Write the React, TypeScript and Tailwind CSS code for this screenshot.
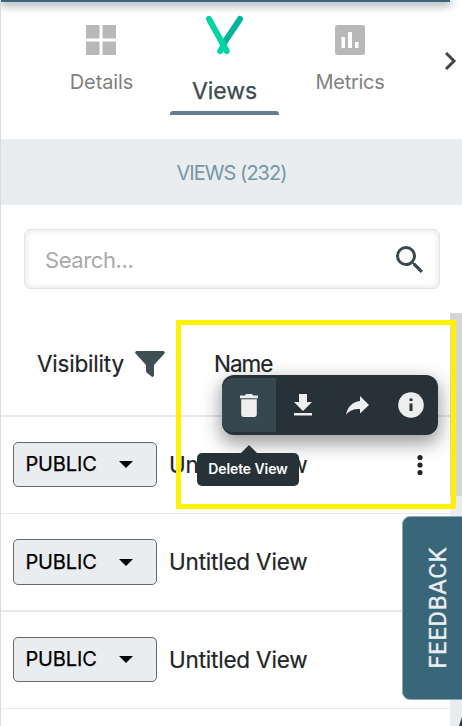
const FONT = "font-[Inter,'Liberation_Sans',sans-serif]";

function Row({ className, button, menu }: { className: string; button: string; menu?: boolean }) {
  return (
    <div className={`flex shrink-0 items-start border-[#e6e8e9] pl-3 ${className}`}>
      <button className={`flex w-36 shrink-0 items-center rounded-[5px] border border-[#66696b] bg-[#e9edf0] pb-px pl-[11.5px] text-black ${button}`}>
        <span className="w-[93.5px] text-left text-[20px] leading-none tracking-[-0.15px] [-webkit-text-stroke:0.25px_black]">PUBLIC</span>
        <svg className="mt-px" width="14" height="7" viewBox="0 0 14 7" fill="black"><path d="M0 0H14L7 7Z" /></svg>
      </button>
      <span className="ml-3 flex h-[46px] w-[239px] items-center whitespace-nowrap text-[22.5px] tracking-[-0.2px] text-[#222526] [-webkit-text-stroke:0.2px_#222526]">Untitled View</span>
      {menu && (
        <svg className="mt-3" width="24" height="24" viewBox="0 0 24 24" fill="#222526">
          <circle cx="12" cy="3.5" r="2.6" /><circle cx="12" cy="11" r="2.6" /><circle cx="12" cy="18.5" r="2.6" />
        </svg>
      )}
    </div>
  );
}

export default function App() {
  return (
    <div className={`relative flex h-[726px] w-[462px] flex-col overflow-hidden border-l border-[#dcdcdc] bg-white ${FONT}`}>
      <div className="z-10 h-0.5 w-[449px] shrink-0 bg-[#3a6679] shadow-[0_1px_10px_1px_rgba(40,50,70,0.75)]" />

      <nav className="flex h-[137px] shrink-0 items-start">
        <div className="ml-[46px] flex w-[109px] flex-col items-center pt-[23px] text-[#808080]">
          <svg className="mr-px" width="30" height="30" viewBox="0 0 30 30" fill="#b8b8b8">
            <rect width="13.5" height="13.5" rx=".7" /><rect x="16.5" width="13.5" height="13.5" rx=".7" />
            <rect y="16.5" width="13.5" height="13.5" rx=".7" /><rect x="16.5" y="16.5" width="13.5" height="13.5" rx=".7" />
          </svg>
          <span className="mt-[15px] text-[20px] leading-6 tracking-[-0.1px]">Details</span>
        </div>
        <div className="ml-[14px] flex h-[113px] w-[109px] flex-col items-center pt-3">
          <svg width="39" height="42" viewBox="0 0 39 42" fill="none" strokeWidth="6" strokeLinecap="round">
            <path d="M35 5L19 29" stroke="#00b39b" /><path d="M4 5L21.7 37" stroke="#00d4a4" /><path d="M19 31L15.2 37" stroke="#00d4a4" />
          </svg>
          <span className="mt-[21px] text-[23px] leading-7 tracking-[-0.1px] text-[#3b4950] [-webkit-text-stroke:0.25px_#3b4950]">Views</span>
          <div className="mt-auto h-1 w-full rounded-t-[3px] bg-[#627f8d]" />
        </div>
        <div className="ml-4 flex w-[110px] flex-col items-center pt-[23px] text-[#808080]">
          <svg width="30" height="30" viewBox="0 0 30 30"><rect width="30" height="30" rx="3" fill="#b8b8b8" /><path d="M6.5 12h3.5v11H6.5zM13 7h4v16h-4zM20 17h3.5v6H20z" fill="white" /></svg>
          <span className="mt-[15px] text-[20px] leading-6 tracking-[-0.3px]">Metrics</span>
        </div>
        <svg className="ml-10 mt-[50px]" width="12" height="18" viewBox="0 0 12 18" fill="none" stroke="#444" strokeWidth="3"><path d="M1 1L9 9L1 17" /></svg>
      </nav>

      <div className="flex h-[66px] shrink-0 items-center justify-center bg-[#e9edf0] pt-0.5 text-[20px] tracking-[-0.95px] text-[#7497a5]">VIEWS (232)</div>

      <div className="mt-6 ml-[23px] flex h-[60px] w-[416px] shrink-0 items-center justify-between rounded-md border border-[#e5e5e5] pr-4 pl-5 shadow-[inset_0_0_7px_rgba(0,0,0,0.12)]">
        <span className="pt-0.5 text-[22px] tracking-[-0.4px] text-[#a9a9a9]">Search...</span>
        <svg width="27" height="27" viewBox="3 3 17.5 17.5" fill="#3b4950"><path d="M15.5 14h-.79l-.28-.27A6.47 6.47 0 0 0 16 9.5 6.5 6.5 0 1 0 9.5 16c1.61 0 3.09-.59 4.23-1.57l.27.28v.79l5 4.99L20.49 19l-4.99-5zm-6 0C7.01 14 5 11.99 5 9.5S7.01 5 9.5 5 14 7.01 14 9.5 11.99 14 9.5 14z" /></svg>
      </div>

      <div className="mt-6 flex min-h-0 grow">
        <main className="flex w-[449px] shrink-0 flex-col">
          <div className="flex h-[104px] shrink-0 items-center border-b-2 border-[#e6e8e9] pl-9 text-[22.5px] text-[#222526] [-webkit-text-stroke:0.2px_#222526]">
            <span className="w-[98px] tracking-[-0.2px]">Visibility</span>
            <svg width="30" height="26" viewBox="0 0 30 26" fill="#3f4d54" stroke="none"><path d="M1.5 0H28.5Q31 1 29 3L19 14V24.5Q18 27 16 25L12 22Q11 21 11 20V14L1 3Q-1 1 1.5 0Z" /></svg>
            <span className="ml-[49px] tracking-[-1px]">Name</span>
          </div>
          <Row className="h-[97px] border-b pt-[25px]" button="h-[45px]" menu />
          <Row className="h-[98px] border-b-2 pt-[25px]" button="h-[46px]" />
          <Row className="h-[97px] border-b pt-[25px]" button="h-[45px]" />
        </main>
        <div className="flex grow flex-col bg-[#e9edf0]">
          <div className="h-[183px] bg-[#d5d5d5]" />
          <svg className="mt-auto ml-auto" width="3" height="9" viewBox="0 0 3 9" fill="#333"><path d="M3 0V9H0Z" /></svg>
        </div>
      </div>

      <div className="absolute top-[375px] left-[221px] flex h-[60px] w-[216px] items-center overflow-visible rounded-xl bg-[#273238] shadow-[0_7px_18px_2px_rgba(0,0,0,0.38)]">
        <div className="flex h-[54px] w-[54px] items-center justify-center rounded-l-[10px] bg-[#37474f]"><svg width="18" height="23" viewBox="0 0 18 23" fill="#eee"><path d="M0 1.5H5L6 0h6l1 1.5h5v2.8H0zM1.2 5.3h15.6v15q0 2.7-2.7 2.7H3.9q-2.7 0-2.7-2.7z" /></svg></div>
        <div className="flex w-[54px] justify-center"><svg width="18" height="22" viewBox="0 0 18 22" fill="#eee"><path d="M5 0h8v8h5l-9 9-9-9h5zM0 19h18v2.5H0z" /></svg></div>
        <div className="flex w-[54px] justify-center"><svg width="23" height="19" viewBox="0 0 23 19" fill="#eee"><path d="M14 0l9 9-9 8.5V13C8 13 3.5 14 0 19 1.5 11 6 6 14 5z" /></svg></div>
        <div className="flex w-[54px] justify-center"><svg width="26" height="26" viewBox="0 0 26 26"><circle cx="13" cy="13" r="12.8" fill="#eee" /><path d="M11.5 6.5h3V9h-3zM11.5 11.5h3V19h-3z" fill="#273238" /></svg></div>
      </div>
      <div className="absolute top-[445px] left-[196px] flex w-[102px] flex-col items-center">
        <svg className="ml-0.5" width="16" height="8" viewBox="0 0 16 8" fill="#273238"><path d="M8 0L16 8H0z" /></svg>
        <div className="flex h-[33px] w-full items-center justify-center whitespace-nowrap rounded-[5px] bg-[#273238] pb-0.5 text-[14px] font-semibold tracking-[-0.1px] text-white">Delete View</div>
      </div>
      <div className="absolute top-[320px] left-[175px] h-[189px] w-[280px] border-5 border-[#fff200]" />
      <div className="absolute top-[516px] left-[401px] flex h-[184px] w-[68px] items-center rounded-lg border border-[#8caab5] bg-[#3a6679] pl-[18px] text-[#e9eef0]">
        <span className="rotate-180 font-[Roboto,sans-serif] text-[24px] leading-[34px] tracking-[0.55px] [-webkit-text-stroke:0.3px_#e9eef0] [writing-mode:vertical-rl]">FEEDBACK</span>
      </div>
    </div>
  );
}
